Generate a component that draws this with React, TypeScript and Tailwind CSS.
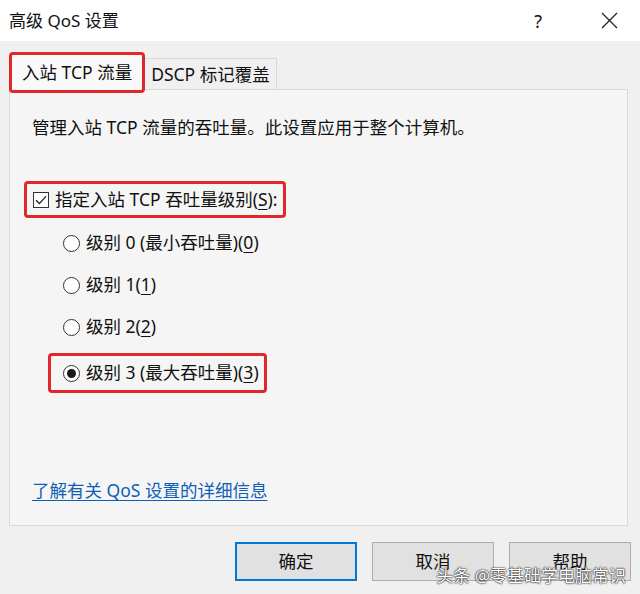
import React from "react";

const font = { fontFamily: '"Noto Sans", "Noto Sans CJK SC", sans-serif' };

function Radio({ checked }: { checked?: boolean }) {
  return (
    <span className="w-[17px] h-[17px] rounded-full border-[1.3px] border-[#333] bg-white flex items-center justify-center shrink-0">
      {checked && <span className="w-[9px] h-[9px] rounded-full bg-[#1a1a1a]" />}
    </span>
  );
}

function U({ children }: { children: React.ReactNode }) {
  return <span className="underline underline-offset-[3px] decoration-1">{children}</span>;
}

export default function App() {
  return (
    <div
      className="w-[640px] h-[594px] bg-[#f0f0f0] text-[#111] text-[17.5px] overflow-hidden relative"
      style={font}
    >
      {/* Title bar */}
      <div className="h-[41px] bg-white flex items-center pl-[9px] text-[17px]">
        <span className="leading-none">高级 QoS 设置</span>
        <span className="ml-auto mr-[59px] text-[18px] leading-none">?</span>
        <svg className="mr-[22px]" width="17" height="17" viewBox="0 0 17 17">
          <path d="M1 1 L16 16 M16 1 L1 16" stroke="#222" strokeWidth="1.3" fill="none" />
        </svg>
      </div>

      {/* Tabs */}
      <div className="flex items-start pl-[9px] pt-[11px]">
        <div className="relative z-10 h-[41px] px-[10px] flex items-center border-[3px] border-[#e0282c] rounded-[4px] bg-[#f9f9f9]">
          入站 TCP 流量
        </div>
        <div className="mt-[6px] h-[31px] px-[6px] flex items-center border border-b-0 border-l-0 border-[#d9d9d9] bg-[#f0f0f0]">
          DSCP 标记覆盖
        </div>
      </div>

      {/* Panel */}
      <div className="ml-[9px] w-[619px] h-[437px] mt-[-4px] border border-[#d9d9d9] bg-[#f5f5f5] flex flex-col px-[14px] pt-[25px]">
        <p className="pl-[8px] leading-[24px]">管理入站 TCP 流量的吞吐量。此设置应用于整个计算机。</p>

        <div className="mt-[42px] self-start h-[37px] flex items-center border-[3px] border-[#e0282c] rounded-[4px] px-[6px]">
          <span className="w-[16px] h-[16px] border-[1.3px] border-[#333] bg-white flex items-center justify-center shrink-0">
            <svg width="14" height="14" viewBox="0 0 14 14">
              <path d="M2 7.2 L5.4 10.6 L12 3.4" stroke="#222" strokeWidth="1.4" fill="none" />
            </svg>
          </span>
          <span className="ml-[6px] leading-none">
            指定入站 TCP 吞吐量级别(<U>S</U>):
          </span>
        </div>

        <div className="mt-[4px] flex flex-col">
          <div className="h-[42px] flex items-center pl-[39px]">
            <Radio />
            <span className="ml-[6px] leading-none">
              级别 0 (最小吞吐量)(<U>0</U>)
            </span>
          </div>
          <div className="h-[42px] flex items-center pl-[39px]">
            <Radio />
            <span className="ml-[6px] leading-none">
              级别 1(<U>1</U>)
            </span>
          </div>
          <div className="h-[42px] flex items-center pl-[39px]">
            <Radio />
            <span className="ml-[6px] leading-none">
              级别 2(<U>2</U>)
            </span>
          </div>
          <div className="mt-[5px] ml-[24px] self-start h-[40px] flex items-center border-[3px] border-[#e0282c] rounded-[4px] pl-[12px] pr-[5px]">
            <Radio checked />
            <span className="ml-[6px] leading-none">
              级别 3 (最大吞吐量)(<U>3</U>)
            </span>
          </div>
        </div>

        <a className="mt-auto mb-[23px] pl-[8px] leading-[24px] text-[#0f5fb5] underline underline-offset-[3px] self-start">
          了解有关 QoS 设置的详细信息
        </a>
      </div>

      {/* Buttons */}
      <div className="flex justify-end gap-[15px] pr-[9px] mt-[16px]">
        <button className="w-[122px] h-[39px] bg-[#e1e1e1] border-2 border-[#0078d7] flex items-center justify-center">
          确定
        </button>
        <button className="w-[122px] h-[39px] bg-[#e1e1e1] border border-[#adadad] flex items-center justify-center">
          取消
        </button>
        <button className="w-[122px] h-[39px] bg-[#e1e1e1] border border-[#adadad] flex items-center justify-center">
          帮助
        </button>
      </div>

      {/* Watermark */}
      <div className="absolute right-[14px] bottom-[10px] text-white text-[17px] leading-none [text-shadow:0_0_2px_#000,0_0_1px_#000]">
        头条 @零基础学电脑常识
      </div>
    </div>
  );
}
